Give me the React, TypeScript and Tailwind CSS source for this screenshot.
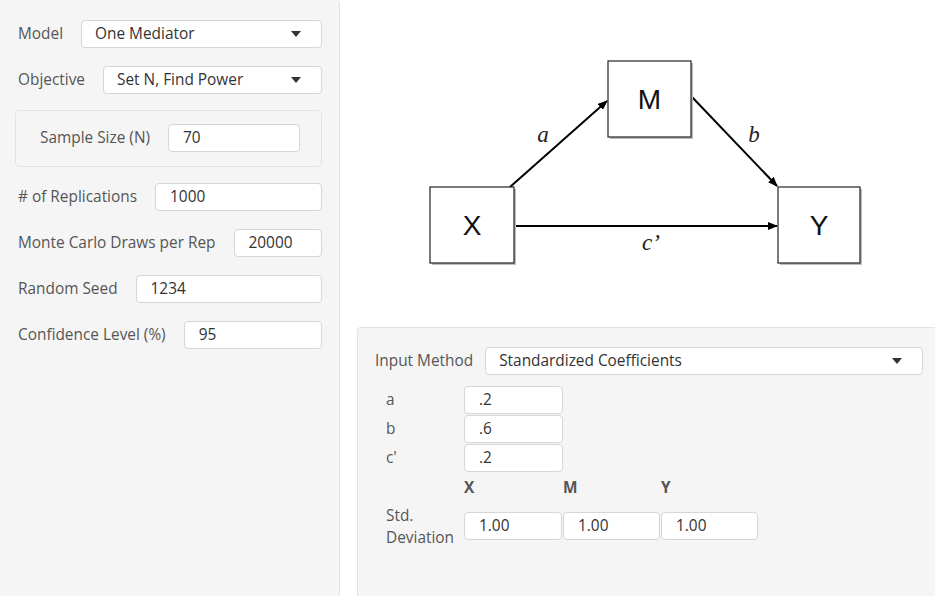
import type { ReactNode } from "react";

// Panel de parámetros (izquierda) + diagrama de mediación y coeficientes (derecha).

function Caret() {
  return (
    <svg width="10" height="6" viewBox="0 0 10 6" className="shrink-0">
      <path d="M0 0 L10 0 L5 6 Z" fill="#333" />
    </svg>
  );
}

function SelectBox({ value, className = "" }: { value: string; className?: string }) {
  return (
    <div
      className={`flex h-[28px] items-center justify-between rounded-[4px] border border-[#d6d6d6] bg-white pl-[13px] pr-[20px] text-[#333] ${className}`}
    >
      <span>{value}</span>
      <Caret />
    </div>
  );
}

function TextBox({ value, className = "" }: { value: string; className?: string }) {
  return (
    <div
      className={`flex h-[28px] items-center rounded-[4px] border border-[#d6d6d6] bg-white pl-[14px] text-[#333] ${className}`}
    >
      {value}
    </div>
  );
}

function Row({ label, children }: { label: string; children: ReactNode }) {
  return (
    <div className="flex items-center">
      <span className="mr-[18px] whitespace-nowrap text-[#555]">{label}</span>
      {children}
    </div>
  );
}

function Diagram() {
  const box = (x: number, y: number, w: number, h: number, t: string) => (
    <g>
      <rect x={x + 2} y={y + 2} width={w} height={h} fill="#bdbdbd" />
      <rect x={x} y={y} width={w} height={h} fill="#fff" stroke="#222" strokeWidth="1.2" />
      <text
        x={x + w / 2}
        y={y + h / 2 + 10}
        textAnchor="middle"
        fontFamily="'Liberation Sans', Arial, sans-serif"
        fontSize="28"
        fill="#111"
      >
        {t}
      </text>
    </g>
  );
  const label = (x: number, y: number, t: string) => (
    <text
      x={x}
      y={y}
      textAnchor="middle"
      fontFamily="'Liberation Serif', 'Times New Roman', serif"
      fontStyle="italic"
      fontSize="23"
      fill="#222"
    >
      {t}
    </text>
  );
  return (
    <svg width="595" height="327" viewBox="0 0 595 327" className="block">
      <defs>
        <marker id="ah" markerWidth="10" markerHeight="8" refX="9" refY="4" orient="auto" markerUnits="userSpaceOnUse">
          <path d="M0 0 L10 4 L0 8 Z" fill="#000" />
        </marker>
      </defs>
      <line x1="170" y1="187" x2="267" y2="101" stroke="#000" strokeWidth="2" markerEnd="url(#ah)" />
      <line x1="352" y1="97" x2="437" y2="186" stroke="#000" strokeWidth="2" markerEnd="url(#ah)" />
      <line x1="174" y1="226" x2="437" y2="226" stroke="#000" strokeWidth="2" markerEnd="url(#ah)" />
      {box(90, 187, 84, 76, "X")}
      {box(268, 61, 83, 76, "M")}
      {box(438, 187, 82, 76, "Y")}
      {label(203, 142, "a")}
      {label(414, 142, "b")}
      {label(311, 250, "c\u2019")}
    </svg>
  );
}

export default function App() {
  return (
    <div
      className="flex h-[596px] w-[935px] overflow-hidden bg-white text-[15.4px] leading-[20px]"
      style={{ fontFamily: "'Open Sans', 'Noto Sans', sans-serif" }}
    >
      <aside className="flex w-[340px] shrink-0 flex-col gap-[18px] rounded-tr-[4px] border-r border-[#e3e3e3] bg-[#f5f5f5] pl-[18px] pr-[17px] pt-[20px]">
        <Row label="Model">
          <SelectBox value="One Mediator" className="flex-1" />
        </Row>
        <Row label="Objective">
          <SelectBox value="Set N, Find Power" className="flex-1" />
        </Row>
        <div className="-ml-[3px] -my-[2px] flex items-center rounded-[4px] border border-[#e3e3e3] pb-[14px] pl-[24px] pr-[21px] pt-[13px]">
          <span className="mr-[18px] text-[#555]">Sample Size (N)</span>
          <TextBox value="70" className="flex-1" />
        </div>
        <Row label="# of Replications">
          <TextBox value="1000" className="flex-1" />
        </Row>
        <Row label="Monte Carlo Draws per Rep">
          <TextBox value="20000" className="flex-1" />
        </Row>
        <Row label="Random Seed">
          <TextBox value="1234" className="flex-1" />
        </Row>
        <Row label="Confidence Level (%)">
          <TextBox value="95" className="flex-1" />
        </Row>
      </aside>

      <main className="flex min-w-0 flex-1 flex-col">
        <Diagram />
        <section className="ml-[17px] w-[590px] flex-1 rounded-tl-[4px] border-l border-t border-[#e3e3e3] bg-[#f5f5f5] pl-[17px] pt-[19px]">
          <div className="flex w-[548px] items-center">
            <span className="mr-[12px] whitespace-nowrap text-[#555]">Input Method</span>
            <SelectBox value="Standardized Coefficients" className="flex-1" />
          </div>
          <div className="mt-[11px] flex flex-col gap-px pl-[11px]">
            {[
              ["a", ".2"],
              ["b", ".6"],
              ["c'", ".2"],
            ].map(([k, v]) => (
              <div key={k} className="flex items-center">
                <span className="w-[78px] text-[#555]">{k}</span>
                <TextBox value={v} className="w-[99px] pl-[12px]" />
              </div>
            ))}
          </div>
          <div className="mt-[6px] flex pl-[89px] font-bold text-[#555]">
            <span className="w-[99px]">X</span>
            <span className="w-[98px]">M</span>
            <span className="w-[98px]">Y</span>
          </div>
          <div className="mt-[7px] flex items-start pl-[11px]">
            <span className="w-[78px] leading-[22px] text-[#555]">
              Std.
              <br />
              Deviation
            </span>
            <div className="mt-[7px] flex gap-px">
              <TextBox value="1.00" className="w-[98px] pl-[14px]" />
              <TextBox value="1.00" className="w-[97px] pl-[14px]" />
              <TextBox value="1.00" className="w-[97px] pl-[14px]" />
            </div>
          </div>
        </section>
      </main>
    </div>
  );
}
